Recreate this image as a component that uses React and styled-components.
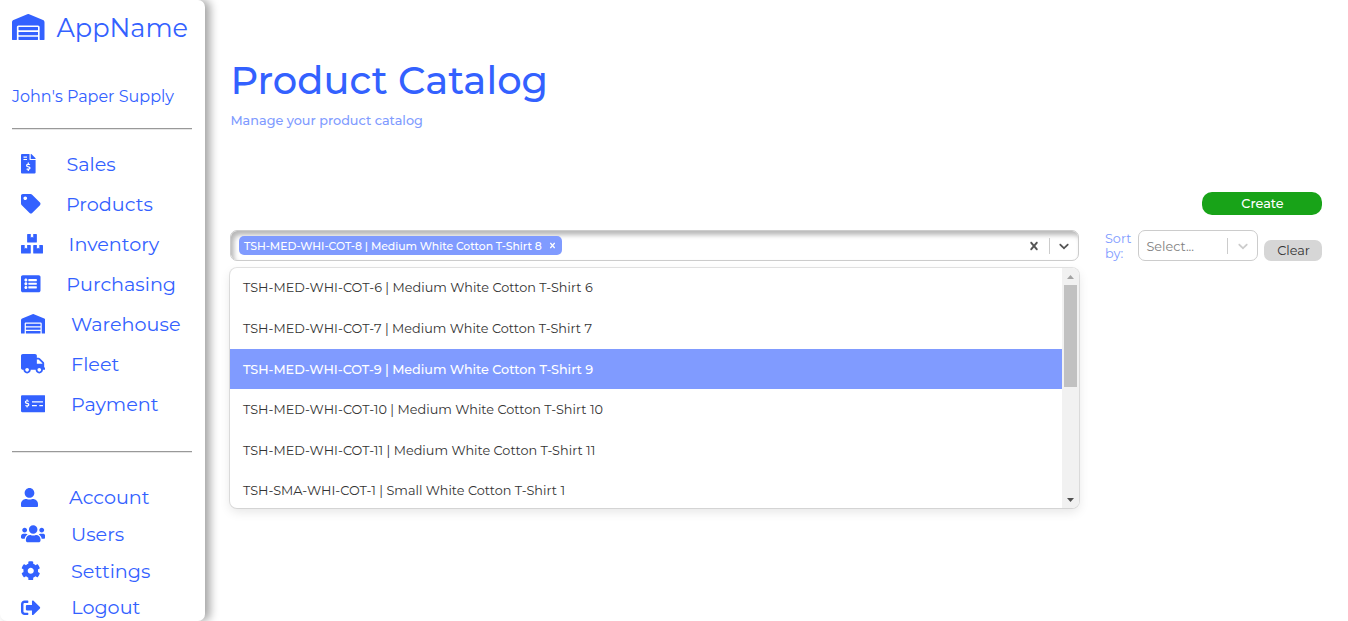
import React from "react";
import styled, { createGlobalStyle } from "styled-components";
import {
  FaWarehouse,
  FaFileInvoiceDollar,
  FaTag,
  FaBoxes,
  FaListAlt,
  FaTruck,
  FaMoneyCheckAlt,
  FaUser,
  FaUsers,
  FaCog,
  FaSignOutAlt,
} from "react-icons/fa";

const BLUE = "#3361ff";
const SOFT_BLUE = "#809bff";
const FONT = 'Montserrat, Inter, "Liberation Sans", sans-serif';

const GlobalStyle = createGlobalStyle`
  * { box-sizing: border-box; }
  body {
    margin: 0;
    background: #fff;
    font-family: ${FONT};
    overflow: hidden;
  }
`;

const Text = styled.span`
  white-space: nowrap;
`;

const Page = styled.div`
  display: flex;
  height: 621px;
`;

const Sidebar = styled.nav`
  flex: none;
  width: 205px;
  height: 621px;
  padding: 0 13px 0 12px;
  border-radius: 0 7px 7px 7px;
  background: #fff;
  box-shadow: 5px 0 10px rgba(0, 0, 0, 0.36);
  color: ${BLUE};
`;

const Brand = styled.div`
  display: flex;
  align-items: center;
  gap: 12px;
  height: 55px;
  font-size: 25.6px;
  svg {
    width: 32.5px;
    height: 26px;
    margin-bottom: 1px;
  }
`;

const Company = styled.div`
  height: 73px;
  padding-top: 31px;
  font-size: 16px;
  line-height: 22px;
`;

const Divider = styled.hr`
  width: 180px;
  height: 2px;
  margin: 0;
  border: 0;
  border-top: 1px solid #999;
  border-bottom: 1px solid #e6e6e6;
`;

const Nav = styled.div`
  padding: ${(p) => p.$pad};
`;

const NavItem = styled.div`
  display: flex;
  align-items: center;
  height: ${(p) => p.$height}px;
  padding-left: 9px;
  font-size: 19.2px;
`;

const NavIcon = styled.span`
  display: flex;
  width: ${(p) => p.$width}px;
  svg {
    width: ${(p) => p.$icon}px;
    height: 19.5px;
  }
`;

const Main = styled.main`
  flex: 1;
  padding: 55px 26px 0 25.4px;
`;

const Title = styled.h1`
  margin: 0;
  height: 52px;
  line-height: 52px;
  font-size: 38.4px;
  font-weight: 500;
  letter-spacing: 0.05px;
  color: ${BLUE};
`;

const Subtitle = styled.p`
  margin: 4px 0 0;
  line-height: 20px;
  font-size: 12.8px;
  font-weight: 500;
  color: ${SOFT_BLUE};
`;

const Actions = styled.div`
  display: flex;
  justify-content: flex-end;
  margin-top: 61px;
`;

const CreateButton = styled.button`
  width: 120px;
  height: 23px;
  padding: 0 0 1px 1px;
  border: 0;
  border-radius: 10px;
  background: #18a318;
  color: #fff;
  font: 500 12.8px ${FONT};
`;

const Filters = styled.div`
  display: flex;
  align-items: flex-start;
  margin: 15px 0 0 -0.4px;
`;

const SearchBox = styled.div`
  position: relative;
  width: 849px;
`;

const Control = styled.div`
  display: flex;
  align-items: center;
  height: 31px;
  border: 1px solid #ccc;
  border-radius: 7px;
  padding-left: ${(p) => p.$pad}px;
  box-shadow: ${(p) => (p.$inset ? "inset 3px 4px 5px #b8b8b8" : "none")};
`;

const Spacer = styled.span`
  flex: 1;
`;

const Tag = styled.span`
  display: flex;
  align-items: center;
  justify-content: space-between;
  width: 323px;
  height: 19px;
  padding: 0 4px 0 5px;
  border-radius: 5px;
  background: ${SOFT_BLUE};
  color: #fff;
  font-size: 10.88px;
  font-weight: 500;
  letter-spacing: -0.05px;
`;

const Separator = styled.span`
  width: 1px;
  height: 16px;
  background: #ccc;
`;

const Indicator = styled.span`
  display: flex;
  justify-content: center;
  width: ${(p) => p.$width}px;
  color: ${(p) => p.$color};
`;

const MenuFrame = styled.div`
  position: absolute;
  top: 38px;
  left: 0;
  width: 849px;
  height: 240px;
  border-radius: 7px;
  background: #fff;
  box-shadow: 0 0 0 1px rgba(0, 0, 0, 0.1), 0 4px 11px rgba(0, 0, 0, 0.1);
`;

const Menu = styled.div`
  display: flex;
  height: 240px;
  overflow: hidden;
  border-radius: 7px;
`;

const Options = styled.div`
  flex: 1;
  margin-top: -0.4px;
`;

const Option = styled.div`
  display: flex;
  align-items: center;
  height: 40.6px;
  padding: 0 13px;
  font-size: 12.8px;
  font-weight: ${(p) => (p.$active ? 500 : 400)};
  letter-spacing: ${(p) => (p.$active ? -0.05 : 0.02)}px;
  color: ${(p) => (p.$active ? "#fff" : "#333")};
  background: ${(p) => (p.$active ? SOFT_BLUE : "transparent")};
`;

const Scrollbar = styled.div`
  display: flex;
  flex-direction: column;
  align-items: center;
  width: 17px;
  background: #f1f1f1;
`;

const ScrollButton = styled.span`
  display: flex;
  align-items: center;
  justify-content: center;
  height: 17px;
`;

const Thumb = styled.span`
  width: 13px;
  height: 102px;
  background: #c1c1c1;
`;

const SortLabel = styled.div`
  width: 59px;
  padding: 1px 0 0 26px;
  line-height: 15px;
  font-size: 12.8px;
  color: ${SOFT_BLUE};
`;

const SortSelect = styled.div`
  width: 120px;
  font-size: 12.8px;
  color: #808080;
`;

const Placeholder = styled(Text)`
  padding-top: 2px;
`;

const ClearButton = styled.button`
  width: 58px;
  height: 21px;
  margin: 10px 0 0 6px;
  padding: 0 0 0 1px;
  border: 0;
  border-radius: 7px;
  background: #d6d6d6;
  color: #333;
  font: 400 12.8px ${FONT};
`;

const Cross = ({ size }) => (
  <svg width={size} height={size} viewBox="0 0 20 20" fill="currentColor">
    <path d="M14.348 14.849c-0.469 0.469-1.229 0.469-1.697 0l-2.651-3.030-2.651 3.029c-0.469 0.469-1.229 0.469-1.697 0-0.469-0.469-0.469-1.229 0-1.697l2.758-3.15-2.759-3.152c-0.469-0.469-0.469-1.228 0-1.697s1.228-0.469 1.697 0l2.652 3.031 2.651-3.031c0.469-0.469 1.228-0.469 1.697 0s0.469 1.229 0 1.697l-2.758 3.152 2.758 3.15c0.469 0.469 0.469 1.229 0 1.698z" />
  </svg>
);

const Chevron = () => (
  <svg width="16" height="16" viewBox="0 0 20 20" fill="currentColor">
    <path d="M4.516 7.548c0.436-0.446 1.043-0.481 1.576 0l3.908 3.747 3.908-3.747c0.533-0.481 1.141-0.446 1.574 0 0.436 0.445 0.408 1.197 0 1.615-0.406 0.418-4.695 4.502-4.695 4.502-0.217 0.223-0.502 0.335-0.787 0.335s-0.57-0.112-0.789-0.335c0 0-4.287-4.084-4.695-4.502s-0.436-1.17 0-1.615z" />
  </svg>
);

const MAIN_NAV = [
  { label: "Sales", Icon: FaFileInvoiceDollar, icon: 14.6, width: 45.5 },
  { label: "Products", Icon: FaTag, icon: 19.5, width: 45 },
  { label: "Inventory", Icon: FaBoxes, icon: 22, width: 47.6 },
  { label: "Purchasing", Icon: FaListAlt, icon: 19.5, width: 45.3 },
  { label: "Warehouse", Icon: FaWarehouse, icon: 24.4, width: 50 },
  { label: "Fleet", Icon: FaTruck, icon: 24.4, width: 50 },
  { label: "Payment", Icon: FaMoneyCheckAlt, icon: 24.4, width: 50 },
];

const USER_NAV = [
  { label: "Account", Icon: FaUser, icon: 17, width: 48 },
  { label: "Users", Icon: FaUsers, icon: 24.4, width: 50 },
  { label: "Settings", Icon: FaCog, icon: 19.5, width: 50 },
  { label: "Logout", Icon: FaSignOutAlt, icon: 19.5, width: 50.3 },
];

const OPTIONS = [
  { label: "TSH-MED-WHI-COT-6 | Medium White Cotton T-Shirt 6" },
  { label: "TSH-MED-WHI-COT-7 | Medium White Cotton T-Shirt 7" },
  { label: "TSH-MED-WHI-COT-9 | Medium White Cotton T-Shirt 9", active: true },
  { label: "TSH-MED-WHI-COT-10 | Medium White Cotton T-Shirt 10" },
  { label: "TSH-MED-WHI-COT-11 | Medium White Cotton T-Shirt 11" },
  { label: "TSH-SMA-WHI-COT-1 | Small White Cotton T-Shirt 1" },
];

const NavList = ({ items, height, pad }) => (
  <Nav $pad={pad}>
    {items.map(({ label, Icon, icon, width }) => (
      <NavItem key={label} $height={height}>
        <NavIcon $width={width} $icon={icon}><Icon /></NavIcon>
        <Text>{label}</Text>
      </NavItem>
    ))}
  </Nav>
);

export default function App() {
  return (
    <>
      <GlobalStyle />
      <Page>
        <Sidebar>
          <Brand><FaWarehouse /><Text>AppName</Text></Brand>
          <Company><Text>John's Paper Supply</Text></Company>
          <Divider />
          <NavList items={MAIN_NAV} height={40} pad="14px 0 27px" />
          <Divider />
          <NavList items={USER_NAV} height={36.7} pad="26px 0 0" />
        </Sidebar>
        <Main>
          <Title><Text>Product Catalog</Text></Title>
          <Subtitle><Text>Manage your product catalog</Text></Subtitle>
          <Actions><CreateButton><Text>Create</Text></CreateButton></Actions>
          <Filters>
            <SearchBox>
              <Control $inset $pad={8}>
                <Tag>
                  <Text>TSH-MED-WHI-COT-8 | Medium White Cotton T-Shirt 8</Text>
                  <Cross size={11} />
                </Tag>
                <Spacer />
                <Indicator $width={31} $color="#555"><Cross size={16} /></Indicator>
                <Separator />
                <Indicator $width={28} $color="#555"><Chevron /></Indicator>
              </Control>
              <MenuFrame>
                <Menu>
                  <Options>
                    {OPTIONS.map(({ label, active }) => (
                      <Option key={label} $active={active}><Text>{label}</Text></Option>
                    ))}
                  </Options>
                  <Scrollbar>
                    <ScrollButton>
                      <svg width="7" height="4" viewBox="0 0 7 4"><path d="M0 4L3.5 0L7 4Z" fill="#a3a3a3" /></svg>
                    </ScrollButton>
                    <Thumb />
                    <Spacer />
                    <ScrollButton>
                      <svg width="7" height="4" viewBox="0 0 7 4"><path d="M0 0L3.5 4L7 0Z" fill="#505050" /></svg>
                    </ScrollButton>
                  </Scrollbar>
                </Menu>
              </MenuFrame>
            </SearchBox>
            <SortLabel><Text>Sort</Text><br /><Text>by:</Text></SortLabel>
            <SortSelect>
              <Control $pad={7.5}>
                <Placeholder>Select...</Placeholder>
                <Spacer />
                <Separator />
                <Indicator $width={29} $color="#ccc"><Chevron /></Indicator>
              </Control>
            </SortSelect>
            <ClearButton><Text>Clear</Text></ClearButton>
          </Filters>
        </Main>
      </Page>
    </>
  );
}
